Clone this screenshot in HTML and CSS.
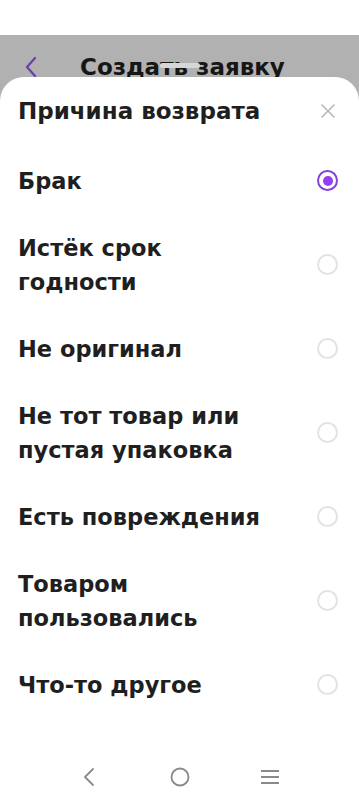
FILE: index.html
```html
<!DOCTYPE html>
<html lang="ru">
<head>
<meta charset="utf-8">
<meta name="viewport" content="width=device-width, initial-scale=1">
<title>Причина возврата</title>
<link rel="stylesheet" href="styles.css">
</head>
<body>
<div class="screen">
  <div class="status"></div>
  <div class="backdrop">
    <header class="appbar">
      <svg class="appbar-back" width="14" height="22" viewBox="0 0 14 22"><path d="M11 2 L3 11 L11 20" fill="none" stroke="#6a3fa6" stroke-width="2.2" stroke-linecap="round" stroke-linejoin="round"/></svg>
      <h1 class="appbar-title">Создать заявку</h1>
      <span class="handle"></span>
    </header>
    <section class="sheet">
      <div class="sheet-head">
        <h2 class="sheet-title">Причина возврата</h2>
        <svg class="close" width="16" height="16" viewBox="0 0 16 16"><path d="M2 2 L14 14 M14 2 L2 14" stroke="#b8b8b8" stroke-width="1.6" stroke-linecap="round"/></svg>
      </div>
      <ul class="options">
        <li class="option"><span class="option-text">Брак</span><span class="radio radio-on"></span></li>
        <li class="option"><span class="option-text">Истёк срок<br>годности</span><span class="radio"></span></li>
        <li class="option"><span class="option-text">Не оригинал</span><span class="radio"></span></li>
        <li class="option"><span class="option-text">Не тот товар или<br>пустая упаковка</span><span class="radio"></span></li>
        <li class="option"><span class="option-text">Есть повреждения</span><span class="radio"></span></li>
        <li class="option"><span class="option-text">Товаром<br>пользовались</span><span class="radio"></span></li>
        <li class="option"><span class="option-text">Что-то другое</span><span class="radio"></span></li>
      </ul>
      <nav class="navbar">
        <svg width="22" height="22" viewBox="0 0 22 22"><path d="M14 3 L6 11 L14 19" fill="none" stroke="#8a8a8a" stroke-width="1.8" stroke-linecap="round" stroke-linejoin="round"/></svg>
        <svg width="22" height="22" viewBox="0 0 22 22"><circle cx="11" cy="11" r="8.5" fill="none" stroke="#8a8a8a" stroke-width="1.8"/></svg>
        <svg width="22" height="22" viewBox="0 0 22 22"><path d="M2 5 H20 M2 11 H20 M2 17 H20" stroke="#8a8a8a" stroke-width="1.8"/></svg>
      </nav>
    </section>
  </div>
</div>
</body>
</html>
```

FILE: styles.css
```css
* { box-sizing: border-box; }
html, body { margin: 0; padding: 0; }
body {
  width: 359px;
  height: 800px;
  overflow: hidden;
  font-family: "DejaVu Sans", "Noto Sans", "Liberation Sans", sans-serif;
  color: #1f1f1f;
  background: #fff;
}
.screen { display: flex; flex-direction: column; height: 800px; }
.status { height: 35px; background: #fff; flex: none; }
.backdrop {
  flex: 1;
  background: #b1b1b1;
  display: flex;
  flex-direction: column;
}
.appbar {
  position: relative;
  height: 42px;
  overflow: hidden;
  display: flex;
  align-items: flex-start;
  padding: 21px 0 0 24px;
  gap: 42px;
}
.appbar-back { flex: none; }
.appbar-title {
  margin: 0;
  font-size: 23px;
  line-height: 22px;
  font-weight: 700;
  color: #161616;
}
.handle {
  position: absolute;
  left: 160px;
  top: 28px;
  width: 40px;
  height: 5px;
  border-radius: 3px;
  background: #d6d6d6;
}
.sheet {
  flex: 1;
  background: #fff;
  border-radius: 24px 24px 0 0;
  padding: 17px 0 0 18px;
  display: flex;
  flex-direction: column;
}
.sheet-head {
  display: flex;
  align-items: center;
  justify-content: space-between;
  padding-right: 23px;
  margin-bottom: 20px;
}
.sheet-title {
  margin: 0;
  font-size: 23px;
  line-height: 34px;
  font-weight: 700;
}
.close { flex: none; }
.options { list-style: none; margin: 0; padding: 0; }
.option {
  display: flex;
  align-items: center;
  justify-content: space-between;
  padding: 16.5px 21px 16.5px 0;
}
.option:first-child { padding-top: 15.5px; }
.option-text {
  font-size: 22.5px;
  line-height: 34px;
  font-weight: 700;
}
.radio {
  flex: none;
  width: 21px;
  height: 21px;
  border-radius: 50%;
  border: 2px solid #e3e3e3;
  display: flex;
  align-items: center;
  justify-content: center;
}
.radio-on { border-color: #8440e0; }
.radio-on::after {
  content: "";
  width: 10px;
  height: 10px;
  border-radius: 50%;
  background: #9440f2;
}
.navbar {
  margin-top: auto;
  margin-left: -18px;
  height: 48px;
  display: flex;
  justify-content: center;
  align-items: flex-start;
  gap: 68px;
  padding-top: 14px;
}
```
